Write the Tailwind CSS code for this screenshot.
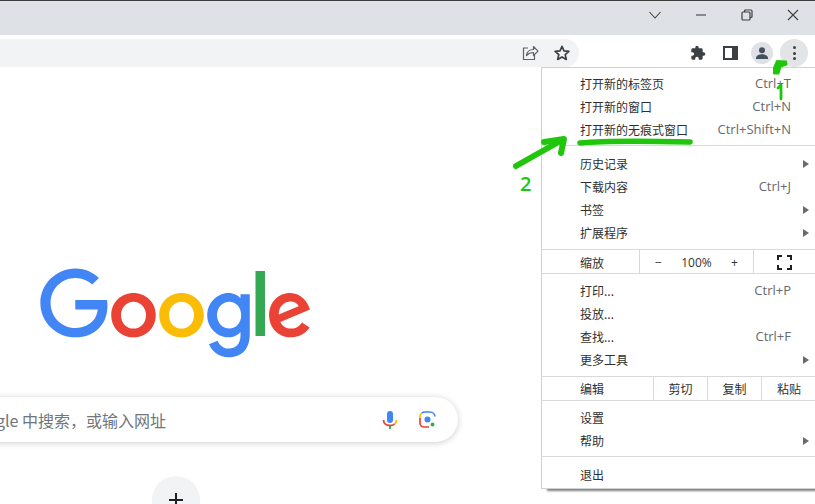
<!DOCTYPE html>
<html lang="zh">
<head>
<meta charset="utf-8">
<script src="https://cdn.jsdelivr.net/npm/@tailwindcss/browser@4"></script>
<title>Chrome</title>
</head>
<body class="m-0 bg-white overflow-hidden font-['Open_Sans','Noto_Sans_CJK_SC',sans-serif]">
<div class="relative w-[815px] h-[504px] overflow-hidden flex flex-col bg-white">

  <!-- title bar -->
  <div class="h-[35px] shrink-0 bg-[#dee1e6] border-t border-[#3c3c3c] flex items-start justify-end mr-[-1px] text-[#3c4043]">
    <div class="w-[46px] h-[28px] flex items-center justify-center"><svg width="14" height="14" viewBox="0 0 14 14" fill="none" stroke="currentColor" stroke-width="1.1"><path d="M1.5 4l5.5 6 5.5-6"/></svg></div>
    <div class="w-[46px] h-[28px] flex items-center justify-center"><svg width="12" height="12" viewBox="0 0 12 12" fill="none" stroke="currentColor" stroke-width="1.1"><path d="M1 6h10"/></svg></div>
    <div class="w-[46px] h-[28px] flex items-center justify-center"><svg width="12" height="12" viewBox="0 0 12 12" fill="none" stroke="currentColor" stroke-width="1.2"><rect x="1" y="3" width="8" height="8" rx="1"/><path d="M3.5 3V2a1 1 0 0 1 1-1H10a1 1 0 0 1 1 1v5.5a1 1 0 0 1-1 1H9"/></svg></div>
    <div class="w-[46px] h-[28px] flex items-center justify-center"><svg width="12" height="12" viewBox="0 0 12 12" fill="none" stroke="currentColor" stroke-width="1.1"><path d="M1 1l10 10M11 1L1 11"/></svg></div>
  </div>

  <!-- toolbar -->
  <div class="h-[33px] shrink-0 bg-white flex items-start pt-[4px] text-[#5f6368]">
    <div class="w-[579px] h-[28px] bg-[#f1f3f4] rounded-r-full flex items-center justify-end pr-[7px] gap-[12px] shrink-0">
      <svg width="20" height="20" viewBox="0 0 20 20" fill="none" stroke="#5f6368" stroke-width="1.2"><path d="M8 5H3.5v11.5h11V12"/><path d="M6.5 12.5c.5-3.8 3.2-6 7-6V3.5l4.5 4.6-4.5 4.4V9.5c-3 0-5.3 1-7 3z" stroke-linejoin="round"/></svg>
      <svg width="20" height="20" viewBox="0 0 20 20" fill="none" stroke="#3c4043" stroke-width="1.7"><path d="M10 3.3l2 4.5 4.9.5-3.7 3.3 1.1 4.8-4.3-2.5-4.3 2.5 1.1-4.8-3.7-3.3 4.9-.5z" stroke-linejoin="round"/></svg>
    </div>
    <div class="ml-[103px] flex items-center h-[28px]">
      <div class="w-[32px] flex justify-center">
        <svg width="16" height="16" viewBox="0 0 24 24" fill="#3c4043"><path d="M20.5 11H19V7a2 2 0 0 0-2-2h-4V3.5a2.5 2.5 0 0 0-5 0V5H4a2 2 0 0 0-2 2v3.8h1.5a2.7 2.7 0 0 1 0 5.4H2V20a2 2 0 0 0 2 2h3.8v-1.5a2.7 2.7 0 0 1 5.4 0V22H17a2 2 0 0 0 2-2v-4h1.5a2.5 2.5 0 0 0 0-5z"/></svg>
      </div>
      <div class="w-[32px] flex justify-center">
        <div class="w-[15px] h-[14px] border-2 border-r-[6px] border-[#3c4043]"></div>
      </div>
      <div class="w-[32px] flex justify-center">
        <div class="w-[22px] h-[22px] rounded-full bg-[#dfe1e5] flex items-center justify-center">
          <svg width="16" height="16" viewBox="0 0 24 24" fill="#45505f"><circle cx="12" cy="8" r="4.5"/><path d="M3 20c0-4 5-6 9-6s9 2 9 6v1H3z"/></svg>
        </div>
      </div>
      <div class="w-[32px] flex justify-center">
        <div class="w-[28px] h-[28px] rounded-full bg-[#e3e4e6] flex flex-col items-center justify-center gap-[2.5px]">
          <span class="w-[3px] h-[3px] rounded-full bg-[#3c4043]"></span>
          <span class="w-[3px] h-[3px] rounded-full bg-[#3c4043]"></span>
          <span class="w-[3px] h-[3px] rounded-full bg-[#3c4043]"></span>
        </div>
      </div>
    </div>
  </div>

  <!-- new tab page -->
  <main class="flex-1 ml-[-108px] w-[566px] flex flex-col">
    <svg class="ml-[148px] mt-[200px] shrink-0" width="272" height="92" viewBox="0 0 272 92">
      <path fill="#EA4335" d="M115.75 47.18c0 12.77-9.99 22.18-22.25 22.18s-22.25-9.41-22.25-22.18C71.25 34.32 81.24 25 93.5 25s22.25 9.32 22.25 22.18zm-9.74 0c0-7.98-5.79-13.44-12.51-13.44S80.99 39.2 80.99 47.18c0 7.9 5.79 13.44 12.51 13.44s12.51-5.55 12.51-13.44z"/>
      <path fill="#FBBC05" d="M163.75 47.18c0 12.77-9.99 22.18-22.25 22.18s-22.25-9.41-22.25-22.18c0-12.85 9.99-22.18 22.25-22.18s22.25 9.32 22.25 22.18zm-9.74 0c0-7.98-5.79-13.44-12.51-13.44s-12.51 5.46-12.51 13.44c0 7.9 5.79 13.44 12.51 13.44s12.51-5.55 12.51-13.44z"/>
      <path fill="#4285F4" d="M209.75 26.34v39.82c0 16.38-9.66 23.07-21.08 23.07-10.75 0-17.22-7.19-19.66-13.07l8.48-3.53c1.51 3.61 5.21 7.87 11.17 7.87 7.31 0 11.84-4.51 11.84-13v-3.19h-.34c-2.18 2.69-6.38 5.04-11.68 5.04-11.09 0-21.25-9.66-21.25-22.09 0-12.52 10.16-22.26 21.25-22.26 5.29 0 9.49 2.35 11.68 4.96h.34v-3.61h9.25zm-8.56 20.92c0-7.81-5.21-13.52-11.84-13.52-6.72 0-12.35 5.71-12.35 13.52 0 7.73 5.63 13.36 12.35 13.36 6.63 0 11.84-5.63 11.84-13.36z"/>
      <path fill="#34A853" d="M225 3v65h-9.5V3h9.5z"/>
      <path fill="#EA4335" d="M262.02 54.48l7.56 5.04c-2.44 3.61-8.32 9.83-18.48 9.83-12.6 0-22.01-9.74-22.01-22.18 0-13.19 9.49-22.18 20.92-22.18 11.51 0 17.14 9.16 18.98 14.11l1.01 2.52-29.65 12.28c2.27 4.45 5.8 6.72 10.75 6.72 4.96 0 8.4-2.44 10.92-6.14zm-23.27-7.98l19.82-8.23c-1.09-2.77-4.37-4.7-8.23-4.7-4.95 0-11.84 4.37-11.59 12.93z"/>
      <path fill="#4285F4" d="M35.29 41.41V32H67c.31 1.64.47 3.58.47 5.68 0 7.06-1.93 15.79-8.15 22.01-6.05 6.3-13.78 9.66-24.02 9.66C16.32 69.35.36 53.89.36 34.91.36 15.93 16.32.47 35.3.47c10.5 0 17.98 4.12 23.6 9.49l-6.64 6.64c-4.03-3.78-9.49-6.72-16.97-6.72-13.86 0-24.7 11.17-24.7 25.03 0 13.86 10.84 25.03 24.7 25.03 8.99 0 14.11-3.61 17.39-6.89 2.66-2.66 4.41-6.46 5.1-11.65l-22.49.01z"/>
    </svg>
    <div class="mt-[37px] h-[45px] shrink-0 rounded-full bg-white shadow-[0_1px_6px_rgba(32,33,36,0.22)] flex items-center pl-[54px] pr-[21px] text-[16px] text-[#70757a] font-['Noto_Sans_CJK_SC',sans-serif]">
      <span class="whitespace-nowrap">在 Google 中搜索，或输入网址</span>
      <div class="ml-auto flex items-center gap-[18px]">
        <svg width="22" height="22" viewBox="0 0 22 22" fill="none"><rect x="8" y="2" width="6" height="12" rx="3" fill="#4285f4"/><path d="M4.5 11c0 3.5 2.8 5.5 6.5 5.5" stroke="#ea4335" stroke-width="1.8"/><path d="M17.5 11c0 1.8-.8 3.2-2 4.1" stroke="#fbbc05" stroke-width="1.8"/><path d="M15.5 15.1c-1.2.9-2.8 1.4-4.5 1.4" stroke="#ea4335" stroke-width="1.8"/><path d="M11 16.5V20" stroke="#34a853" stroke-width="1.8"/></svg>
        <svg width="18" height="18" viewBox="0 0 18 18" fill="none" stroke-width="1.7"><path d="M1 7V5.5A4 4 0 0 1 3 2" stroke="#fbbc05"/><path d="M3 2a4 4 0 0 1 2.5-1H11a5 5 0 0 1 5 4.5" stroke="#4285f4"/><path d="M1 7v5a4 4 0 0 0 4 4h5" stroke="#ea4335"/><circle cx="8.5" cy="8.5" r="3" fill="#4285f4" stroke="none"/><circle cx="13.5" cy="13.5" r="1.9" fill="#34a853" stroke="none"/></svg>
      </div>
    </div>
    <div class="mt-[34px] ml-[260px] w-[48px] h-[48px] shrink-0 rounded-full bg-[#f1f3f4] flex items-center justify-center">
      <svg width="14" height="14" viewBox="0 0 14 14" stroke="#202124" stroke-width="2"><path d="M7 0v14M0 7h14"/></svg>
    </div>
  </main>

  <!-- chrome menu -->
  <div class="absolute left-[541px] top-[67px] w-[280px] h-[422px] bg-white border border-[#cfd1d4] border-r-0 shadow-[6px_2px_2px_rgba(0,0,0,0.5)] text-[12px] leading-[23px] text-[#2f2f2f] font-['Noto_Sans_CJK_SC',sans-serif]">
    <div class="pt-[4px] border-b border-[#d9d9d9] h-[78px]">
      <div class="h-[23px] flex w-[273px] pl-[38px]"><span>打开新的标签页</span><span class="ml-auto pr-[24px] text-[13px] text-[#666a6e] font-['Open_Sans',sans-serif]">Ctrl+T</span></div>
      <div class="h-[23px] flex w-[273px] pl-[38px]"><span>打开新的窗口</span><span class="ml-auto pr-[24px] text-[13px] text-[#666a6e] font-['Open_Sans',sans-serif]">Ctrl+N</span></div>
      <div class="h-[23px] flex w-[273px] pl-[38px]"><span>打开新的无痕式窗口</span><span class="ml-auto pr-[24px] text-[13px] text-[#666a6e] font-['Open_Sans',sans-serif]">Ctrl+Shift+N</span></div>
    </div>
    <div class="pt-[6px] border-b border-[#d9d9d9] h-[104px]">
      <div class="h-[23px] flex items-center w-[273px] pl-[38px]"><span>历史记录</span><span class="ml-auto mr-[6px] border-l-[6px] border-y-[4px] border-y-transparent border-l-[#6b6b6b]"></span></div>
      <div class="h-[23px] flex w-[273px] pl-[38px]"><span>下载内容</span><span class="ml-auto pr-[24px] text-[13px] text-[#666a6e] font-['Open_Sans',sans-serif]">Ctrl+J</span></div>
      <div class="h-[23px] flex items-center w-[273px] pl-[38px]"><span>书签</span><span class="ml-auto mr-[6px] border-l-[6px] border-y-[4px] border-y-transparent border-l-[#6b6b6b]"></span></div>
      <div class="h-[23px] flex items-center w-[273px] pl-[38px]"><span>扩展程序</span><span class="ml-auto mr-[6px] border-l-[6px] border-y-[4px] border-y-transparent border-l-[#6b6b6b]"></span></div>
    </div>
    <div class="h-[24px] flex items-center border-b border-[#d9d9d9]">
      <span class="w-[98px] h-full pl-[38px] pt-[1px] border-r border-[#d9d9d9]">缩放</span>
      <div class="w-[114px] h-full pt-[1px] flex items-center justify-between px-[15px] border-r border-[#d9d9d9] font-['Open_Sans',sans-serif] text-[#333]"><span>−</span><span>100%</span><span>+</span></div>
      <div class="w-[60px] pt-[1px] flex justify-center"><svg width="15" height="15" viewBox="0 0 15 15" fill="none" stroke="#1f1f1f" stroke-width="2"><path d="M1 5V1h4M10 1h4v4M14 10v4h-4M5 14H1v-4"/></svg></div>
    </div>
    <div class="pt-[5px] border-b border-[#d9d9d9] h-[103px]">
      <div class="h-[23px] flex w-[273px] pl-[38px]"><span>打印...</span><span class="ml-auto pr-[24px] text-[13px] text-[#666a6e] font-['Open_Sans',sans-serif]">Ctrl+P</span></div>
      <div class="h-[23px] flex w-[273px] pl-[38px]"><span>投放...</span></div>
      <div class="h-[23px] flex w-[273px] pl-[38px]"><span>查找...</span><span class="ml-auto pr-[24px] text-[13px] text-[#666a6e] font-['Open_Sans',sans-serif]">Ctrl+F</span></div>
      <div class="h-[23px] flex items-center w-[273px] pl-[38px]"><span>更多工具</span><span class="ml-auto mr-[6px] border-l-[6px] border-y-[4px] border-y-transparent border-l-[#6b6b6b]"></span></div>
    </div>
    <div class="h-[24px] flex border-b border-[#d9d9d9]">
      <span class="w-[112px] pl-[38px] border-r border-[#d9d9d9]">编辑</span>
      <span class="w-[54px] text-center border-r border-[#d9d9d9]">剪切</span>
      <span class="w-[54px] text-center border-r border-[#d9d9d9]">复制</span>
      <span class="w-[54px] text-center">粘贴</span>
    </div>
    <div class="pt-[5px] border-b border-[#d9d9d9] h-[56px]">
      <div class="h-[23px] flex w-[273px] pl-[38px]"><span>设置</span></div>
      <div class="h-[23px] flex items-center w-[273px] pl-[38px]"><span>帮助</span><span class="ml-auto mr-[6px] border-l-[6px] border-y-[4px] border-y-transparent border-l-[#6b6b6b]"></span></div>
    </div>
    <div class="pt-[6px]">
      <div class="h-[23px] flex w-[273px] pl-[38px]"><span>退出</span></div>
    </div>
  </div>

  <!-- green hand-drawn annotations -->
  <svg class="absolute left-0 top-0 pointer-events-none" width="815" height="504" viewBox="0 0 815 504" fill="none" stroke="#1fc60c" stroke-linecap="round" stroke-linejoin="round">
    <path d="M580 143c30-3 70-2 110-1" stroke-width="5.5"/>
    <path d="M516 166l46-26" stroke-width="6"/>
    <path d="M544 142l20-3-3 14" stroke-width="6"/>
    <path d="M781 85v14M778 88l3-3" stroke-width="2.8"/>
    <path d="M774 73.500V68l3-7 9 .5.500 3-6 2-2 7z" stroke-width="2" fill="#1fc60c"/>
  </svg>
  <span class="absolute left-[520px] top-[170px] text-[20px] leading-[28px] font-semibold text-[#1fc60c] font-['Open_Sans',sans-serif]">2</span>
</div>
</body>
</html>
